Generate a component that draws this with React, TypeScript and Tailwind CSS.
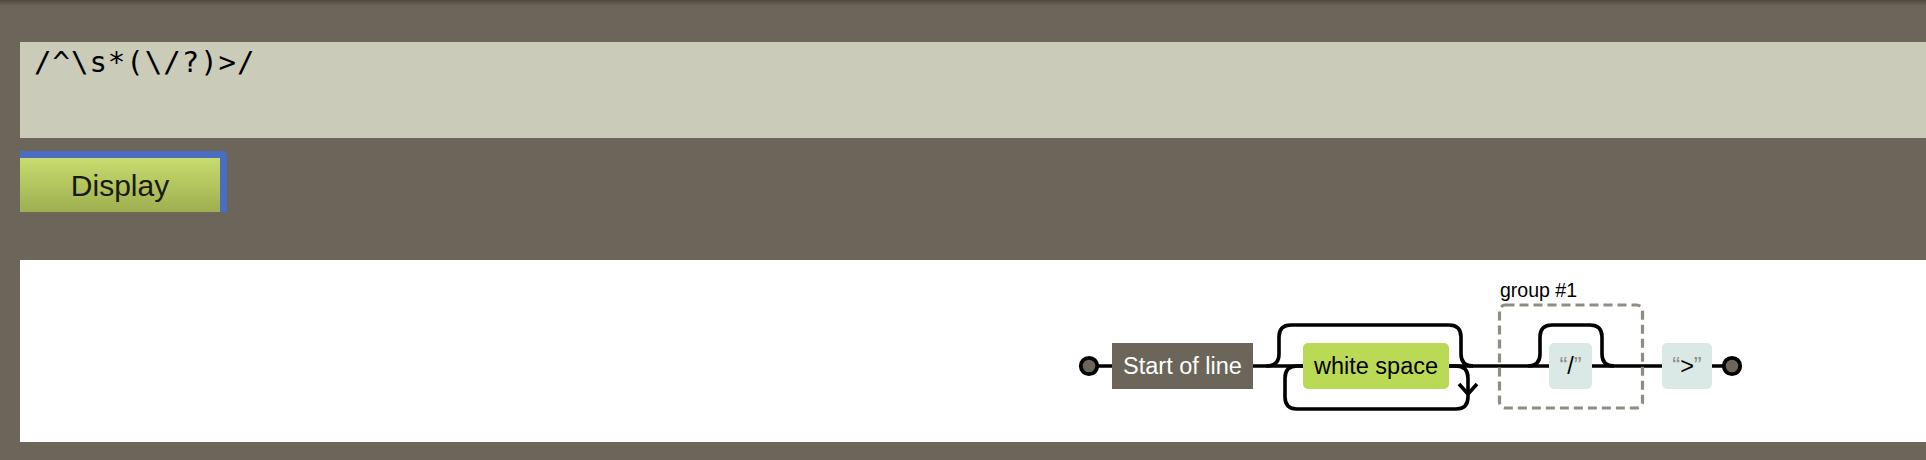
const FONT = "'Liberation Sans', Arial, sans-serif";

function Diagram() {
  return (
    <svg className="block" width="1906" height="182" viewBox="20 260 1906 182">
      <g fill="none" stroke="#000" strokeWidth="3.6">
        {/* main line */}
        <path d="M1097,366 H1112 M1253,366 H1303 M1449,366 H1549 M1592,366 H1662 M1712,366 H1724" />
        {/* skip over white space */}
        <path d="M1266,366 q13,0 13,-12 v-17 q0,-12 12,-12 H1449 q12,0 12,12 v17 q0,12 12,12" />
        {/* repeat loop */}
        <path d="M1449,366 H1456 q12,0 12,12 v19 q0,12 -12,12 H1297 q-12,0 -12,-12 v-19 q0,-12 12,-12 H1303" />
        <path d="M1459,384 L1468,394 L1477,384" />
        {/* skip over slash */}
        <path d="M1528,366 q12,0 12,-12 v-17 q0,-12 12,-12 H1590 q12,0 12,12 v17 q0,12 12,12" />
      </g>

      {/* group box */}
      <rect x="1499.5" y="305" width="143" height="103" rx="6" fill="none" stroke="#908c83" strokeWidth="3.2" strokeDasharray="9,5" />
      <text x="1500" y="297" fontSize="19.5" fontFamily={FONT} fill="#000">group #1</text>

      {/* start / end */}
      <circle cx="1089" cy="366" r="8.2" fill="#6b6659" stroke="#000" strokeWidth="3.8" />
      <circle cx="1732" cy="366" r="8.2" fill="#6b6659" stroke="#000" strokeWidth="3.8" />

      {/* Start of line */}
      <rect x="1112" y="343" width="141" height="46" fill="#6b6659" />
      <text x="1182.5" y="374" textAnchor="middle" fontSize="23.5" fontFamily={FONT} fill="#fff">Start of line</text>

      {/* white space */}
      <rect x="1303" y="343" width="146" height="46" rx="5" fill="#bada55" />
      <text x="1376" y="374" textAnchor="middle" fontSize="23.5" fontFamily={FONT} fill="#000">white space</text>

      {/* literal / */}
      <rect x="1549" y="343" width="43" height="46" rx="5" fill="#dae9e5" />
      <text x="1570.5" y="374" textAnchor="middle" fontSize="23.5" fontFamily={FONT} fill="#000">
        <tspan fill="#908c83">“</tspan>/<tspan fill="#908c83">”</tspan>
      </text>

      {/* literal > */}
      <rect x="1662" y="343" width="50" height="46" rx="5" fill="#dae9e5" />
      <text x="1687" y="374" textAnchor="middle" fontSize="23.5" fontFamily={FONT} fill="#000">
        <tspan fill="#908c83">“</tspan>&gt;<tspan fill="#908c83">”</tspan>
      </text>
    </svg>
  );
}

export default function App() {
  return (
    <div className="min-h-[460px] overflow-hidden bg-[#6b6659]">
      <div className="h-[6px] bg-gradient-to-b from-[#4e4a42] to-[#6b6659]" />

      <div className="pl-5 pt-[36px]">
        {/* Regex input */}
        <div
          className="h-[96px] bg-[#cbcbba] pl-[14px] pt-[5px] text-[29px] leading-[30px] tracking-[1px] text-black"
          style={{ fontFamily: "'DejaVu Sans Mono', monospace" }}
        >
          /^\s*(\/?)&gt;/
        </div>

        {/* Display button with focus ring */}
        <div className="mt-[13px] w-[207px] rounded-tr-[5px] border-t-[7px] border-r-[7px] border-[#4b6cc3]">
          <button
            className="flex h-[54px] w-full items-center justify-center bg-gradient-to-b from-[#c8dc6f] to-[#9daf4f] text-[30px] text-[#1a1a12]"
            style={{ fontFamily: "'Liberation Sans', Arial, sans-serif" }}
          >
            Display
          </button>
        </div>

        {/* Diagram output */}
        <div className="mt-[48px] h-[182px] bg-white">
          <Diagram />
        </div>
      </div>
    </div>
  );
}
